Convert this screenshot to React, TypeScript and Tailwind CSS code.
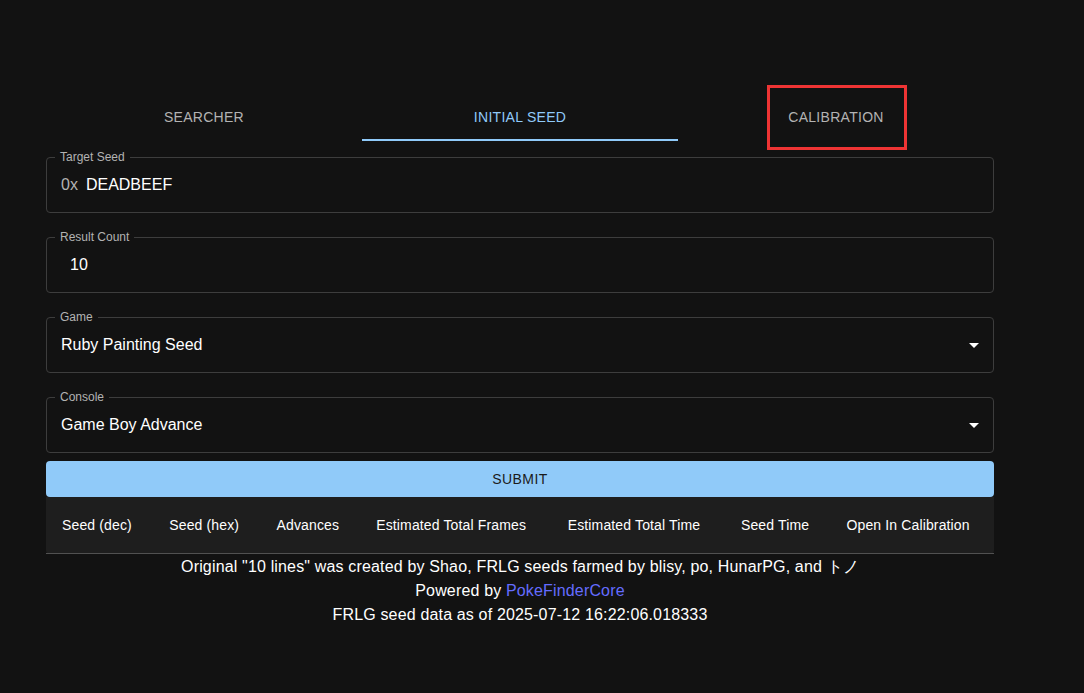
import React from 'react';

const tabs = ['Searcher', 'Initial Seed', 'Calibration'];
const columns = [
  'Seed (dec)',
  'Seed (hex)',
  'Advances',
  'Estimated Total Frames',
  'Estimated Total Time',
  'Seed Time',
  'Open In Calibration',
];

const ArrowDropDown = () => (
  <svg viewBox="0 0 24 24" className="absolute right-[7px] top-1/2 -translate-y-1/2 w-6 h-6 fill-white">
    <path d="M7 10l5 5 5-5z" />
  </svg>
);

type FieldProps = {
  label: string;
  children: React.ReactNode;
  select?: boolean;
};

const Field: React.FC<FieldProps> = ({ label, children, select }) => (
  <div className="relative h-14 rounded border border-[#3d3d3d] flex items-center px-[14px]">
    <span className="absolute -top-[9px] left-2 px-[5px] bg-[#121212] text-xs leading-4 text-[#b3b3b3]">
      {label}
    </span>
    {children}
    {select && <ArrowDropDown />}
  </div>
);

export default function App() {
  const active = 1;

  return (
    <div className="min-h-[693px] bg-[#121212] text-white font-['Liberation_Sans',Arial,sans-serif]">
      <div className="ml-[46px] w-[948px] pt-[93px]">
        <div className="flex h-12">
          {tabs.map((tab, i) => (
            <div
              key={tab}
              className={`relative flex-1 flex items-center justify-center text-sm font-medium uppercase tracking-[0.02em] ${
                i === active ? 'text-[#90caf9]' : 'text-[#b3b3b3]'
              }`}
            >
              {tab}
              {i === active && <span className="absolute bottom-0 left-0 right-0 h-[2px] bg-[#90caf9]" />}
              {i === 2 && (
                <span className="absolute left-[89px] -top-2 w-[140px] h-[65px] border-[3px] border-[#ee3434]" />
              )}
            </div>
          ))}
        </div>

        <div className="mt-4 flex flex-col gap-6">
          <Field label="Target Seed">
            <span className="text-base text-[#b3b3b3] mr-2">0x</span>
            <span className="text-base">DEADBEEF</span>
          </Field>
          <Field label="Result Count">
            <span className="text-base pl-[9px]">10</span>
          </Field>
          <Field label="Game" select>
            <span className="text-base">Ruby Painting Seed</span>
          </Field>
          <Field label="Console" select>
            <span className="text-base">Game Boy Advance</span>
          </Field>
        </div>

        <button className="mt-2 w-full h-9 rounded bg-[#90caf9] text-sm font-medium uppercase tracking-[0.03em] text-[#1b1b1b]">
          Submit
        </button>

        <div className="bg-[#1e1e1e] rounded-b">
          <table className="w-full border-collapse">
            <thead>
              <tr>
                {columns.map((c) => (
                  <th
                    key={c}
                    className="px-4 py-4 text-left text-sm font-medium leading-6 tracking-[0.01em] border-b border-[#515151] whitespace-nowrap"
                  >
                    {c}
                  </th>
                ))}
              </tr>
            </thead>
          </table>
        </div>

        <div className="text-center text-base leading-6 tracking-[0.01em] pt-px">
          <p>Original "10 lines" was created by Shao, FRLG seeds farmed by blisy, po, HunarPG, and トノ</p>
          <p>
            Powered by <a className="text-[#646cff]">PokeFinderCore</a>
          </p>
          <p>FRLG seed data as of 2025-07-12 16:22:06.018333</p>
        </div>
      </div>
    </div>
  );
}
